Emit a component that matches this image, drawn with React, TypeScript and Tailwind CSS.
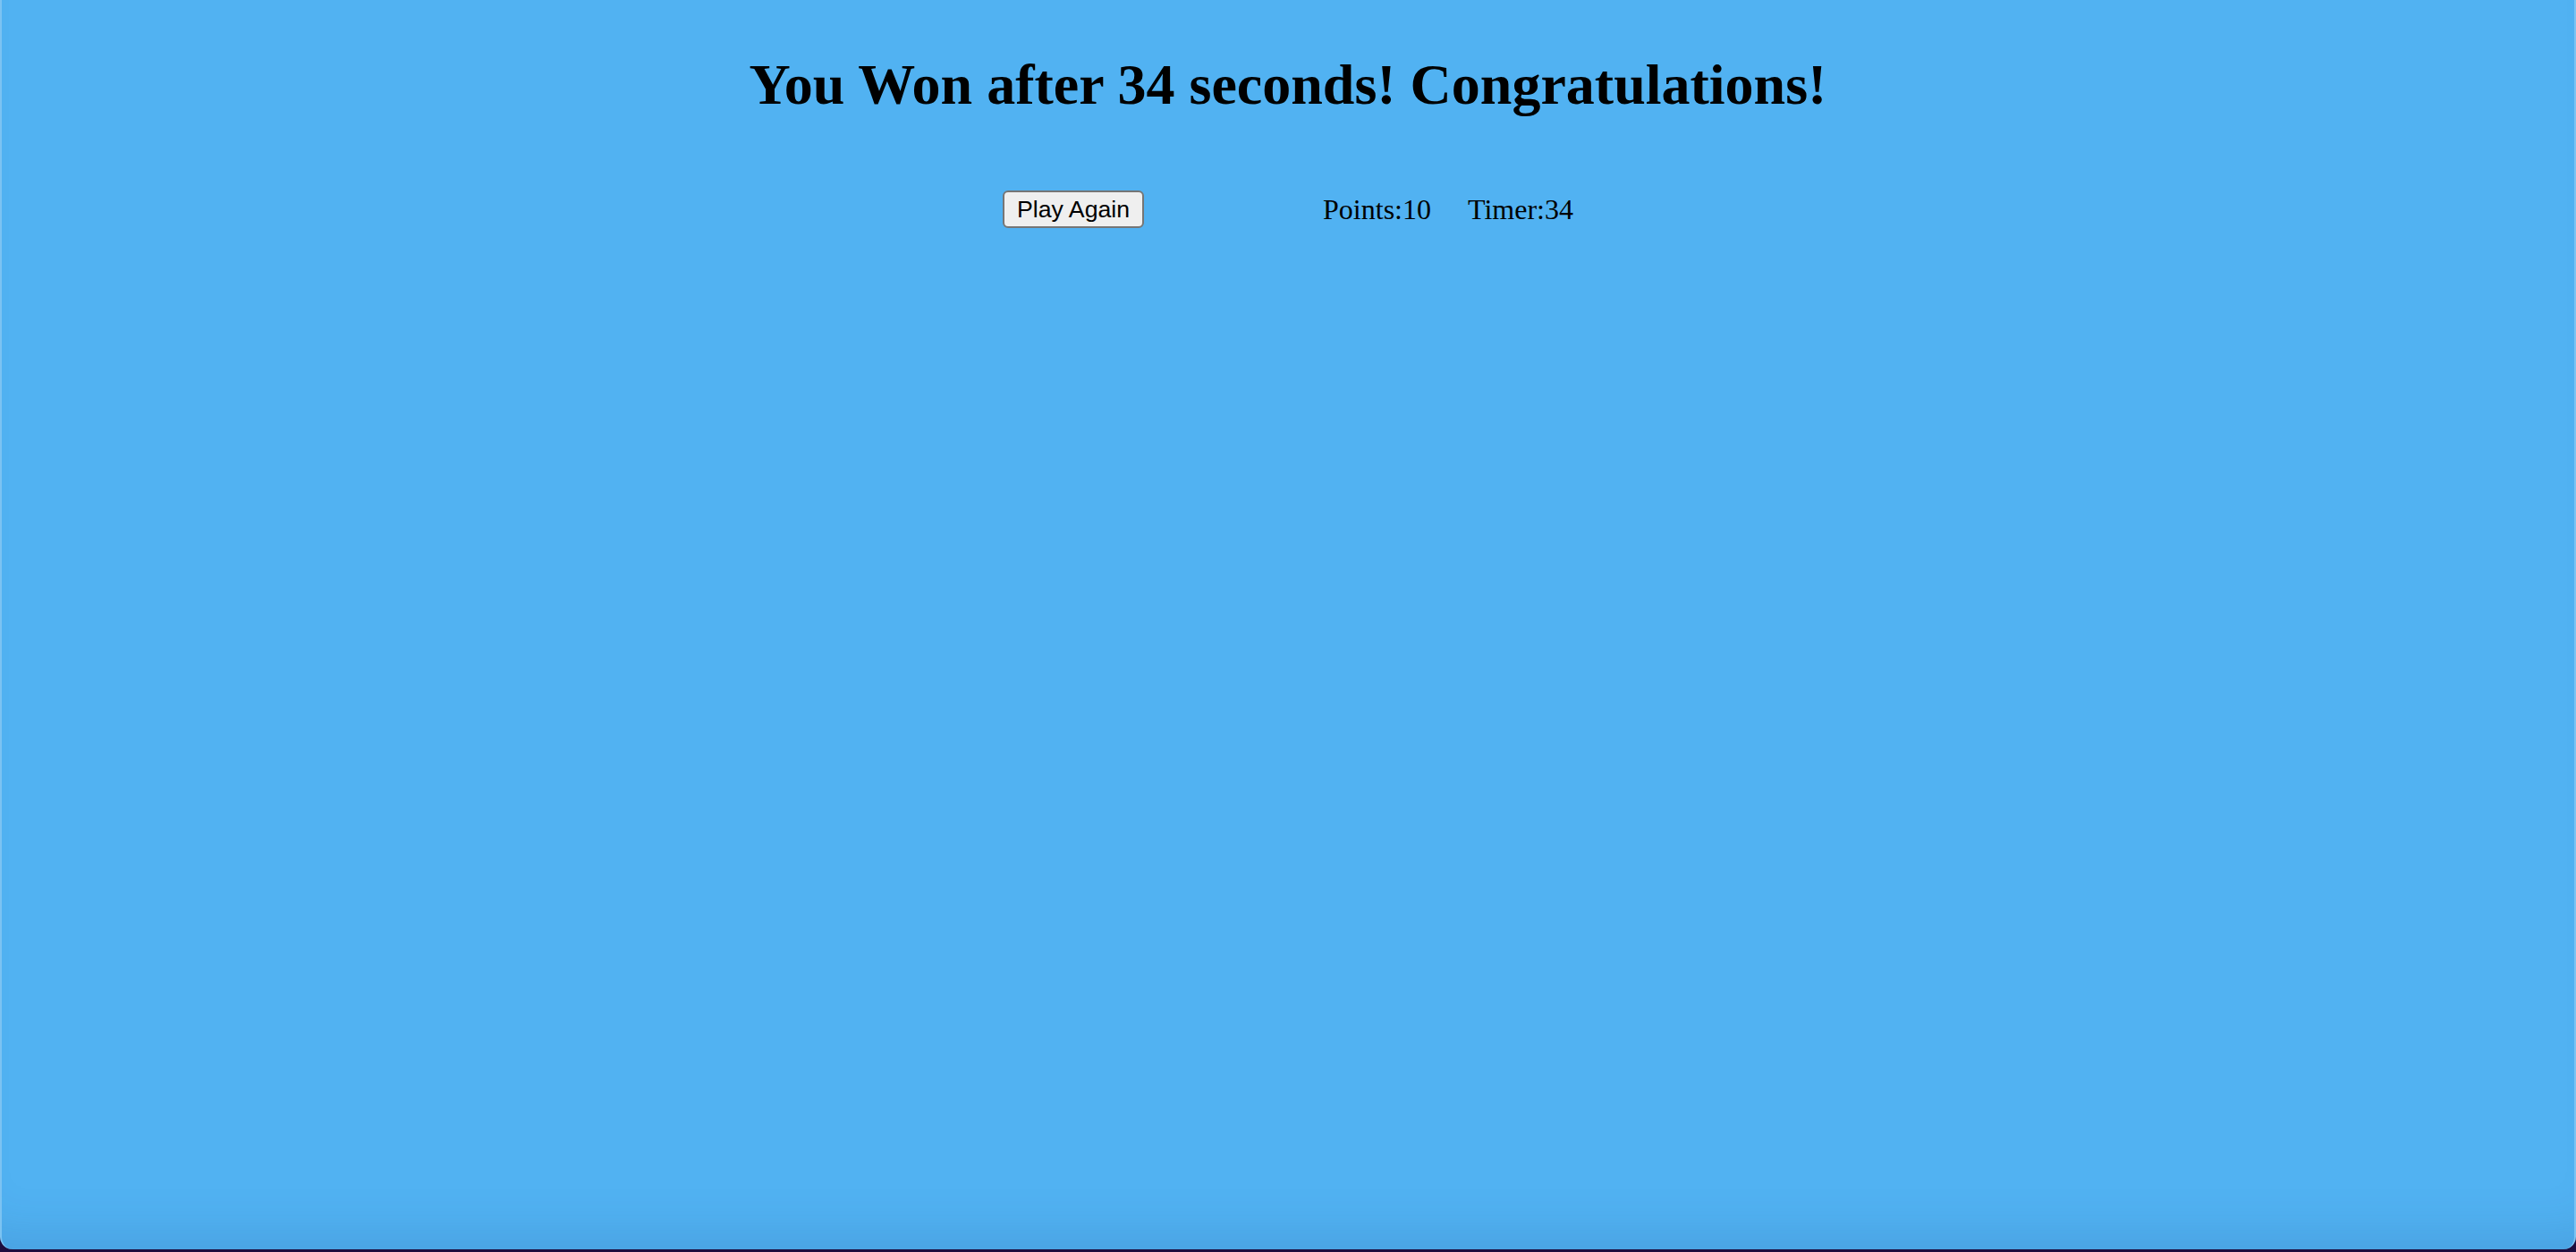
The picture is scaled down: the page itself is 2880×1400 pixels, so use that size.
export default function App() {
  const points = 10;
  const timer = 34;

  return (
    <div className="w-full h-[1400px] bg-[#1c0d3f] overflow-hidden">
      <div
        className="relative h-[1397px] bg-[#51b2f2] rounded-b-[14px] border-l-2 border-r-2 border-[#7cc3f2] shadow-[inset_0_-60px_60px_-50px_rgba(30,60,120,0.18)] pt-[16px]"
        style={{ fontFamily: '"Liberation Serif", "Times New Roman", serif' }}
      >
        <h1 className="text-center text-[64px] font-bold leading-[71px] text-black mt-[43px]">
          You Won after {timer} seconds! Congratulations!
        </h1>
        <div className="flex items-center justify-center mt-[83px] text-[32px] leading-[37px] text-black">
          <button
            className="h-[42px] px-[14px] bg-[#efefef] border-2 border-[#767676] rounded-[6px] text-[26.67px] text-black"
            style={{ fontFamily: '"Liberation Sans", Arial, sans-serif' }}
          >
            Play Again
          </button>
          <span className="ml-[200px]">Points:{points}</span>
          <span className="ml-[41px]">Timer:{timer}</span>
        </div>
      </div>
    </div>
  );
}
